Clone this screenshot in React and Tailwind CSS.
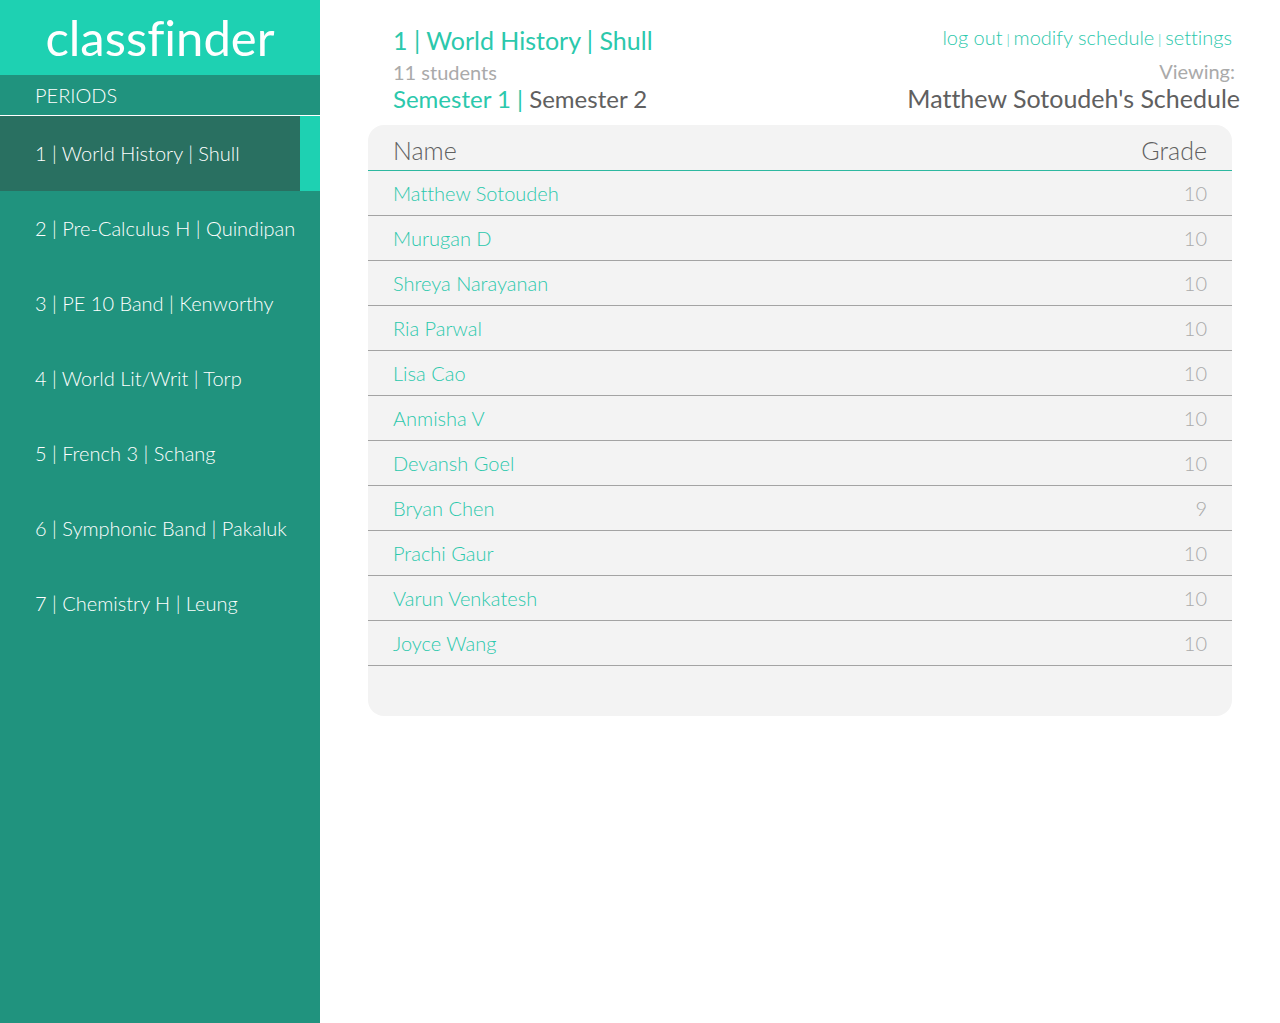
const periods = [
  '1 | World History | Shull',
  '2 | Pre-Calculus H | Quindipan',
  '3 | PE 10 Band | Kenworthy',
  '4 | World Lit/Writ | Torp',
  '5 | French 3 | Schang',
  '6 | Symphonic Band | Pakaluk',
  '7 | Chemistry H | Leung',
];

const students = [
  ['Matthew Sotoudeh', 10],
  ['Murugan D', 10],
  ['Shreya Narayanan', 10],
  ['Ria Parwal', 10],
  ['Lisa Cao', 10],
  ['Anmisha V', 10],
  ['Devansh Goel', 10],
  ['Bryan Chen', 9],
  ['Prachi Gaur', 10],
  ['Varun Venkatesh', 10],
  ['Joyce Wang', 10],
];

function Sidebar() {
  return (
    <aside className="w-1/4 shrink-0 bg-[#20937e] text-white">
      <a
        href="#home"
        className="flex h-[75px] items-center justify-center bg-[#1ed1b2] pb-0.5 text-[49px] leading-[48px] font-normal"
      >
        classfinder
      </a>
      <h2 className="border-b border-white pl-[35px] text-[20px] leading-[40px] font-light">PERIODS</h2>
      <nav aria-label="Periods">
        {periods.map((period, i) => (
          <a
            key={period}
            href={`#period-${i + 1}`}
            aria-current={i === 0 ? 'page' : undefined}
            className={
              i === 0
                ? 'block border-r-[20px] border-[#1ed1b2] bg-[#297061] pl-[35px] text-[20px] leading-[75px] font-light whitespace-nowrap'
                : 'block pl-[35px] text-[20px] leading-[75px] font-light whitespace-nowrap'
            }
          >
            {period}
          </a>
        ))}
      </nav>
    </aside>
  );
}

function Header() {
  return (
    <header className="flex items-start justify-between pt-[25px] pr-10 pl-[73px]">
      <div>
        <h1 className="text-[25px] leading-[30px] text-[#2bc8ac]">{periods[0]}</h1>
        <p className="pt-[5px] text-[20px] leading-6 text-[#aaaaaa]">11 students</p>
        <p className="text-[24px] leading-[30px] text-[#606060]">
          <a href="#semester-1" className="text-[#2bc8ac]">Semester 1 |</a>{' '}
          <a href="#semester-2">Semester 2</a>
        </p>
      </div>
      <div className="text-right">
        <nav aria-label="Account" className="pr-2 text-[14px] leading-6 font-light text-[#2bc8ac]">
          <a href="#logout" className="text-[20px]">log out</a>
          {' | '}
          <a href="#modify" className="text-[20px]">modify schedule</a>
          {' | '}
          <a href="#settings" className="text-[20px]">settings</a>
        </nav>
        <p className="pt-[7px] pr-[5px] text-[20px] leading-6 text-[#aaaaaa]">Viewing:</p>
        <p className="text-[25px] leading-[30px] text-[#606060]">Matthew Sotoudeh's Schedule</p>
      </div>
    </header>
  );
}

function Roster() {
  return (
    <section className="mx-12 mt-[11px] overflow-hidden rounded-2xl bg-[#f3f3f3] pb-[50px] font-light">
      <table className="w-full border-separate border-spacing-0 text-[20px] leading-[44px]">
        <thead>
          <tr className="text-[25px] leading-[39px] text-[#606060]">
            <th scope="col" className="border-b border-b-[#2db8a0] pt-1.5 pl-[25px] text-left font-light">Name</th>
            <th scope="col" className="border-b border-b-[#2db8a0] pt-1.5 pr-[25px] text-right font-light">Grade</th>
          </tr>
        </thead>
        <tbody>
          {students.map(([name, grade]) => (
            <tr key={name}>
              <td className="border-b border-b-[#a3a3a3] pl-[25px]">
                <a href="#student" className="text-[#2bc8ac]">{name}</a>
              </td>
              <td className="border-b border-b-[#a3a3a3] pr-[25px] text-right text-[#aaaaaa]">{grade}</td>
            </tr>
          ))}
        </tbody>
      </table>
    </section>
  );
}

export default function App() {
  return (
    <div className="flex min-h-screen bg-white font-[Lato,sans-serif] [font-variant-ligatures:none]">
      <Sidebar />
      <main className="min-w-0 flex-1">
        <Header />
        <Roster />
      </main>
    </div>
  );
}
